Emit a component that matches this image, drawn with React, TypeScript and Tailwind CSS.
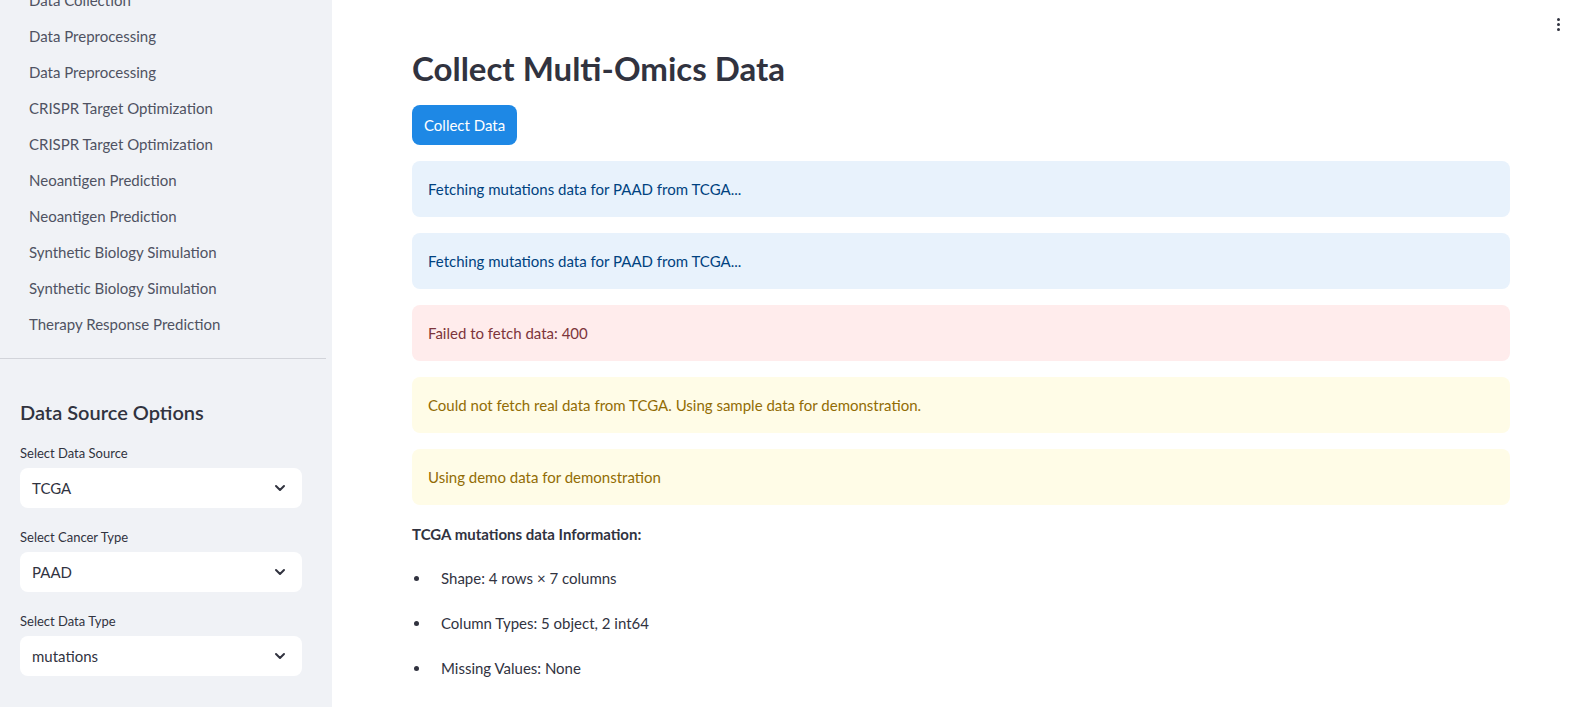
import { ChevronDown } from 'lucide-react';

const NAV_ITEMS = [
  'Data Collection',
  'Data Preprocessing',
  'Data Preprocessing',
  'CRISPR Target Optimization',
  'CRISPR Target Optimization',
  'Neoantigen Prediction',
  'Neoantigen Prediction',
  'Synthetic Biology Simulation',
  'Synthetic Biology Simulation',
  'Therapy Response Prediction',
];

const SELECTS = [
  { label: 'Select Data Source', value: 'TCGA' },
  { label: 'Select Cancer Type', value: 'PAAD' },
  { label: 'Select Data Type', value: 'mutations' },
];

const ALERTS = [
  { text: 'Fetching mutations data for PAAD from TCGA...', tone: 'bg-[#e8f2fc] text-[#004280]' },
  { text: 'Fetching mutations data for PAAD from TCGA...', tone: 'bg-[#e8f2fc] text-[#004280]' },
  { text: 'Failed to fetch data: 400', tone: 'bg-[#ffecec] text-[#7d353b]' },
  {
    text: 'Could not fetch real data from TCGA. Using sample data for demonstration.',
    tone: 'bg-[#fffce7] text-[#926c05]',
  },
  { text: 'Using demo data for demonstration', tone: 'bg-[#fffce7] text-[#926c05]' },
];

const INFO = ['Shape: 4 rows × 7 columns', 'Column Types: 5 object, 2 int64', 'Missing Values: None'];

const Sidebar = () => (
  <aside className="w-[332px] h-[707px] shrink-0 bg-[#f0f2f6] overflow-hidden">
    <ul className="-mt-[18px]">
      {NAV_ITEMS.map((item, i) => (
        <li key={i} className="h-9 flex items-center pl-[29px] text-[15px] text-[#4f5262]">
          {item}
        </li>
      ))}
    </ul>
    <div className="mt-4 w-[326px] h-px bg-[#d2d4da]" />
    <div className="px-5">
      <h3 className="mt-[40px] text-[20px] leading-[26px] font-semibold text-[#31333f]">
        Data Source Options
      </h3>
      <div className="mt-[18px] flex flex-col gap-[19px]">
        {SELECTS.map((s) => (
          <div key={s.label}>
            <div className="h-[21px] flex items-center text-[13px] text-[#31333f]">{s.label}</div>
            <div className="mt-1 h-10 w-[282px] bg-white rounded-lg flex items-center justify-between pl-3 pr-[14px] text-[15px] text-[#31333f]">
              <span>{s.value}</span>
              <ChevronDown size={16} strokeWidth={3} className="text-[#31333f]" />
            </div>
          </div>
        ))}
      </div>
    </div>
  </aside>
);

export default function App() {
  return (
    <div className="flex w-[1596px] h-[707px] overflow-hidden bg-white font-['Lato',sans-serif] text-[#31333f]">
      <Sidebar />
      <main className="flex-1 relative">
        <div className="absolute right-[36px] top-[18px] flex flex-col gap-[2px]">
          <span className="w-[3px] h-[3px] rounded-full bg-[#31333f]" />
          <span className="w-[3px] h-[3px] rounded-full bg-[#31333f]" />
          <span className="w-[3px] h-[3px] rounded-full bg-[#31333f]" />
        </div>
        <div className="ml-[80px] w-[1098px] pt-[47px]">
          <h2 className="text-[33px] leading-[42px] font-bold">Collect Multi-Omics Data</h2>
          <button className="mt-4 h-10 px-3 rounded-lg bg-[#1e88e5] text-white text-[15px]">
            Collect Data
          </button>
          <div className="mt-4 flex flex-col gap-4">
            {ALERTS.map((a, i) => (
              <div key={i} className={`h-14 rounded-lg flex items-center px-4 text-[15px] ${a.tone}`}>
                {a.text}
              </div>
            ))}
          </div>
          <p className="mt-[18px] text-[15px] font-bold leading-[22px]">TCGA mutations data Information:</p>
          <ul className="mt-[11px] flex flex-col">
            {INFO.map((item) => (
              <li key={item} className="h-[45px] flex items-center text-[15px]">
                <span className="w-[5px] h-[5px] rounded-full bg-[#31333f] ml-[2px] mr-[22px]" />
                {item}
              </li>
            ))}
          </ul>
        </div>
      </main>
    </div>
  );
}
